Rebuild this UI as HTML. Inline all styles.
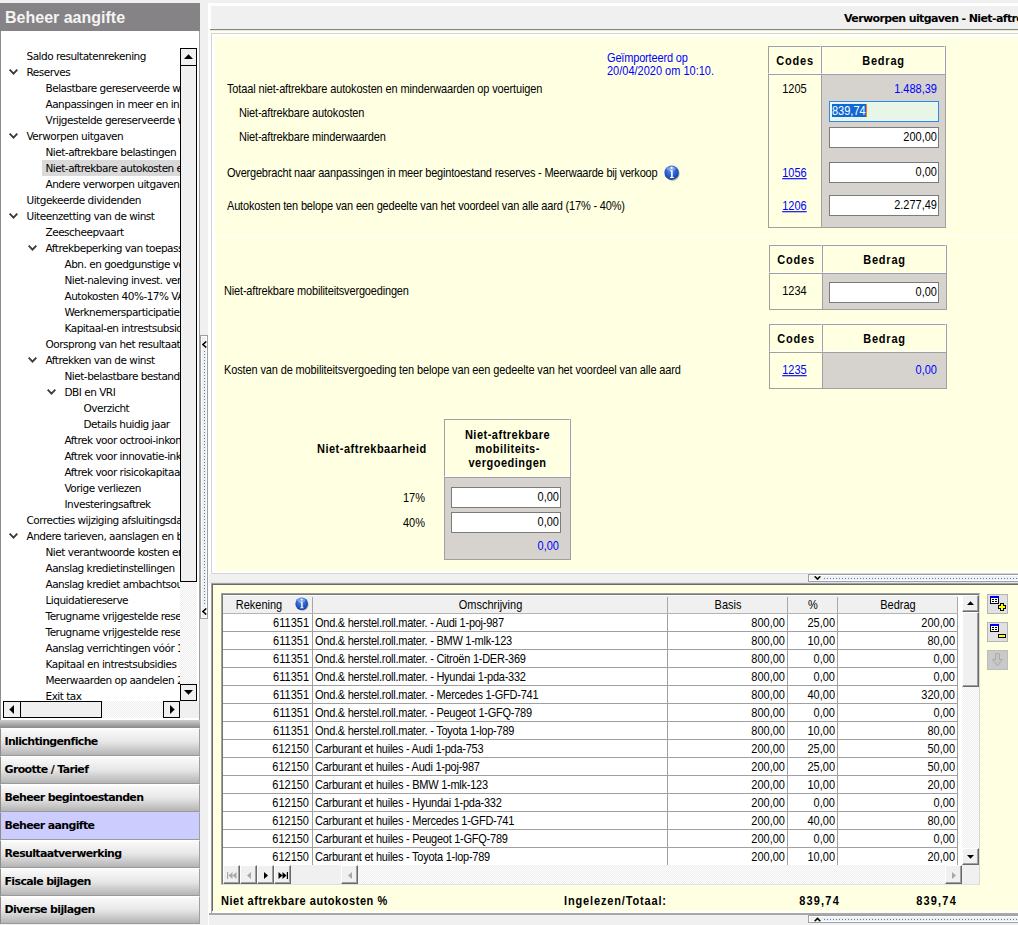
<!DOCTYPE html>
<html lang="nl"><head><meta charset="utf-8"><title>Beheer aangifte</title>
<style>
html,body{margin:0;padding:0}
body{width:1018px;height:925px;overflow:hidden;background:#f0f0f0;position:relative;font-family:"Liberation Sans",sans-serif;font-size:11px;color:#000}
div,span,a{position:absolute;box-sizing:border-box;white-space:nowrap}
.ms{font-family:"Liberation Sans",sans-serif;font-size:11px;line-height:14px;letter-spacing:-0.17px}
.b{font-weight:bold;letter-spacing:0.5px}
.hd{letter-spacing:0.8px;padding-left:1px}
.num{letter-spacing:0}
.t{position:static;display:inline-block;line-height:14px;transform:scaleY(1.12);transform-origin:50% 77%}
a .t{text-decoration:underline}
.blue{color:#0000ff}
a{color:#0000ff;text-decoration:underline}
/* sidebar */
#sbtitle{left:0;top:3px;width:200px;height:28px;background:#858385;color:#f4f4f4;font:bold 16px/30px "Liberation Sans",sans-serif;padding-left:5px}
#tree{left:0;top:31px;width:200px;height:689px;background:#fff;border-left:1px solid #8c8c8c;border-right:1px solid #a0a0a0;overflow:hidden}
.tr{left:0;height:16px;line-height:16px;font-family:"DejaVu Sans","Liberation Sans",sans-serif;font-size:10.5px;letter-spacing:-0.5px;color:#000}
.tr.sel{background:#d9d9d9}
.chev{width:9px;height:6px}
.nav{left:0;width:200px;height:28px;background:linear-gradient(#fbfbfb,#e6e6e6 50%,#b4b4b4);border-top:1px solid #fff;border-bottom:1px solid #9a9a9a;border-left:1px solid #8c8c8c;border-right:1px solid #a0a0a0;font:bold 11px/26px "DejaVu Sans","Liberation Sans",sans-serif;padding-left:3.5px;letter-spacing:-0.65px}
.nav.act{background:#ccccff;border-top-color:#ccccff}
/* main */
.inp{letter-spacing:0;background:#fff;border:1px solid #7b7b7b;height:21px;width:110px;text-align:right;padding-right:1px;line-height:18px}
.hd{background:#ffffe1;border-top:1px solid #a0a0a0;border-left:1px solid #a0a0a0;border-right:1px solid #fff;border-bottom:1px solid #fff;text-align:center;font-weight:bold}
.gcell{height:18px;line-height:19px;border-right:1px solid #a0a0a0;border-bottom:1px solid #a0a0a0;background:#fff;overflow:hidden}
.gh{height:19px;line-height:18px;text-align:center;background:#f0f0f0;border-right:1px solid #a0a0a0;border-bottom:1px solid #a0a0a0;border-top:1px solid #fff;border-left:1px solid #fff}
.r{text-align:right;padding-right:2px}
.l{padding-left:2px;letter-spacing:-0.25px}
.r1{padding-right:2px}
.r3{padding-right:3px}
</style></head><body>

<div id="sbtitle">Beheer aangifte</div>
<div id="tree">
<div class="tr" style="top:17px;left:25.5px">Saldo resultatenrekening</div>
<div class="tr" style="top:33px;left:0;width:25px"><svg class="chev" style="position:absolute;left:8.0px;top:5px" width="9" height="6" viewBox="0 0 9 6"><path d="M0.7 0.7 L4.5 4.6 L8.3 0.7" fill="none" stroke="#3c3c3c" stroke-width="1.9"/></svg></div>
<div class="tr" style="top:33px;left:25.5px">Reserves</div>
<div class="tr" style="top:49px;left:44.5px">Belastbare gereserveerde winst</div>
<div class="tr" style="top:65px;left:44.5px">Aanpassingen in meer en in min</div>
<div class="tr" style="top:81px;left:44.5px">Vrijgestelde gereserveerde winst</div>
<div class="tr" style="top:97px;left:0;width:25px"><svg class="chev" style="position:absolute;left:8.0px;top:5px" width="9" height="6" viewBox="0 0 9 6"><path d="M0.7 0.7 L4.5 4.6 L8.3 0.7" fill="none" stroke="#3c3c3c" stroke-width="1.9"/></svg></div>
<div class="tr" style="top:97px;left:25.5px">Verworpen uitgaven</div>
<div class="tr" style="top:113px;left:44.5px">Niet-aftrekbare belastingen</div>
<div class="tr sel" style="top:129px;left:41px;width:160px"></div>
<div class="tr" style="top:129px;left:44.5px">Niet-aftrekbare autokosten en</div>
<div class="tr" style="top:145px;left:44.5px">Andere verworpen uitgaven</div>
<div class="tr" style="top:161px;left:25.5px">Uitgekeerde dividenden</div>
<div class="tr" style="top:177px;left:0;width:25px"><svg class="chev" style="position:absolute;left:8.0px;top:5px" width="9" height="6" viewBox="0 0 9 6"><path d="M0.7 0.7 L4.5 4.6 L8.3 0.7" fill="none" stroke="#3c3c3c" stroke-width="1.9"/></svg></div>
<div class="tr" style="top:177px;left:25.5px">Uiteenzetting van de winst</div>
<div class="tr" style="top:193px;left:44.5px">Zeescheepvaart</div>
<div class="tr" style="top:209px;left:0;width:44px"><svg class="chev" style="position:absolute;left:27.0px;top:5px" width="9" height="6" viewBox="0 0 9 6"><path d="M0.7 0.7 L4.5 4.6 L8.3 0.7" fill="none" stroke="#3c3c3c" stroke-width="1.9"/></svg></div>
<div class="tr" style="top:209px;left:44.5px">Aftrekbeperking van toepassing</div>
<div class="tr" style="top:225px;left:63.5px">Abn. en goedgunstige voordelen</div>
<div class="tr" style="top:241px;left:63.5px">Niet-naleving invest. verplichting</div>
<div class="tr" style="top:257px;left:63.5px">Autokosten 40%-17% VAA</div>
<div class="tr" style="top:273px;left:63.5px">Werknemersparticipatie</div>
<div class="tr" style="top:289px;left:63.5px">Kapitaal-en intrestsubsidies</div>
<div class="tr" style="top:305px;left:44.5px">Oorsprong van het resultaat</div>
<div class="tr" style="top:321px;left:0;width:44px"><svg class="chev" style="position:absolute;left:27.0px;top:5px" width="9" height="6" viewBox="0 0 9 6"><path d="M0.7 0.7 L4.5 4.6 L8.3 0.7" fill="none" stroke="#3c3c3c" stroke-width="1.9"/></svg></div>
<div class="tr" style="top:321px;left:44.5px">Aftrekken van de winst</div>
<div class="tr" style="top:337px;left:63.5px">Niet-belastbare bestanddelen</div>
<div class="tr" style="top:353px;left:0;width:63px"><svg class="chev" style="position:absolute;left:46.0px;top:5px" width="9" height="6" viewBox="0 0 9 6"><path d="M0.7 0.7 L4.5 4.6 L8.3 0.7" fill="none" stroke="#3c3c3c" stroke-width="1.9"/></svg></div>
<div class="tr" style="top:353px;left:63.5px">DBI en VRI</div>
<div class="tr" style="top:369px;left:82.5px">Overzicht</div>
<div class="tr" style="top:385px;left:82.5px">Details huidig jaar</div>
<div class="tr" style="top:401px;left:63.5px">Aftrek voor octrooi-inkomsten</div>
<div class="tr" style="top:417px;left:63.5px">Aftrek voor innovatie-inkomsten</div>
<div class="tr" style="top:433px;left:63.5px">Aftrek voor risicokapitaal</div>
<div class="tr" style="top:449px;left:63.5px">Vorige verliezen</div>
<div class="tr" style="top:465px;left:63.5px">Investeringsaftrek</div>
<div class="tr" style="top:481px;left:25.5px">Correcties wijziging afsluitingsdatum</div>
<div class="tr" style="top:497px;left:0;width:25px"><svg class="chev" style="position:absolute;left:8.0px;top:5px" width="9" height="6" viewBox="0 0 9 6"><path d="M0.7 0.7 L4.5 4.6 L8.3 0.7" fill="none" stroke="#3c3c3c" stroke-width="1.9"/></svg></div>
<div class="tr" style="top:497px;left:25.5px">Andere tarieven, aanslagen en belastingen</div>
<div class="tr" style="top:513px;left:44.5px">Niet verantwoorde kosten en</div>
<div class="tr" style="top:529px;left:44.5px">Aanslag kredietinstellingen</div>
<div class="tr" style="top:545px;left:44.5px">Aanslag krediet ambachtsoutillage</div>
<div class="tr" style="top:561px;left:44.5px">Liquidatiereserve</div>
<div class="tr" style="top:577px;left:44.5px">Terugname vrijgestelde reserve</div>
<div class="tr" style="top:593px;left:44.5px">Terugname vrijgestelde reserve</div>
<div class="tr" style="top:609px;left:44.5px">Aanslag verrichtingen vóór 1990</div>
<div class="tr" style="top:625px;left:44.5px">Kapitaal en intrestsubsidies landbouw</div>
<div class="tr" style="top:641px;left:44.5px">Meerwaarden op aandelen 25%</div>
<div class="tr" style="top:657px;left:44.5px">Exit tax</div>
<div style="left:179px;top:17px;width:20px;height:671px;background:#fff"></div>
<div style="left:179px;top:34px;width:17px;height:620px;background:#f7f7f7;background-image:repeating-conic-gradient(#fff 0 25%,#ededed 0 50%);background-size:2px 2px"></div>
<div style="left:179px;top:17px;width:17px;height:18px;background:#f0f0f0;border:1px solid #000"><svg style="position:absolute;left:3px;top:5px" width="9" height="5" viewBox="0 0 9 5"><path d="M0 5 L4.5 0.3 L9 5Z" fill="#000"/></svg></div>
<div style="left:179px;top:34px;width:17px;height:517px;background:#f0f0f0;border:1px solid #000"></div>
<div style="left:179px;top:653px;width:17px;height:17px;background:#f0f0f0;border:1px solid #000"><svg style="position:absolute;left:3px;top:5px" width="9" height="5" viewBox="0 0 9 5"><path d="M0 0 L4.5 4.7 L9 0Z" fill="#000"/></svg></div>
<div style="left:0px;top:670px;width:198px;height:18px;background:#fff"></div>
<div style="left:2px;top:670px;width:177px;height:17px;background:#f7f7f7;background-image:repeating-conic-gradient(#fff 0 25%,#ededed 0 50%);background-size:2px 2px"></div>
<div style="left:179px;top:670px;width:19px;height:17px;background:#f0f0f0"></div>
<div style="left:2px;top:670px;width:18px;height:17px;background:#f0f0f0;border:1px solid #000"><svg style="position:absolute;left:5px;top:3px" width="5" height="9" viewBox="0 0 5 9"><path d="M5 0 L0.3 4.5 L5 9Z" fill="#000"/></svg></div>
<div style="left:19px;top:670px;width:82px;height:17px;background:#f0f0f0;border:1px solid #000"></div>
<div style="left:162px;top:670px;width:17px;height:17px;background:#f0f0f0;border:1px solid #000"><svg style="position:absolute;left:6px;top:3px" width="5" height="9" viewBox="0 0 5 9"><path d="M0 0 L4.7 4.5 L0 9Z" fill="#000"/></svg></div>
</div>
<div style="left:0;top:720px;width:200px;height:8px;background:linear-gradient(#cecece,#8a8a8a)"></div>
<div class="nav" style="top:728px">Inlichtingenfiche</div>
<div class="nav" style="top:756px">Grootte / Tarief</div>
<div class="nav" style="top:784px">Beheer begintoestanden</div>
<div class="nav act" style="top:812px">Beheer aangifte</div>
<div class="nav" style="top:840px">Resultaatverwerking</div>
<div class="nav" style="top:868px">Fiscale bijlagen</div>
<div class="nav" style="top:896px">Diverse bijlagen</div>
<div style="left:200px;top:335px;width:8px;height:284px;background:#f0f0f0;border:1px solid #a0a0a0;box-shadow:inset 0 0 0 1px #fff"></div>
<div style="left:204px;top:351px;width:1px;height:254px;background-image:repeating-linear-gradient(#2a86e0 0 1px,transparent 1px 3px);"></div>
<svg style="position:absolute;left:202px;top:341px" width="5" height="7" viewBox="0 0 5 7"><path d="M4.3 0.5 L0.9 3.5 L4.3 6.5" fill="none" stroke="#000" stroke-width="1.5"/></svg>
<svg style="position:absolute;left:202px;top:608px" width="5" height="7" viewBox="0 0 5 7"><path d="M4.3 0.5 L0.9 3.5 L4.3 6.5" fill="none" stroke="#000" stroke-width="1.5"/></svg>
<div style="left:208px;top:3px;width:810px;height:571px;background:#fff"></div>
<div style="left:211px;top:6px;width:807px;height:23px;background:#f0f0f0"></div>
<div style="left:210px;top:29px;width:808px;height:1px;background:#858585"></div>
<div style="left:210px;top:30px;width:808px;height:1px;background:#e8e8e8"></div>
<div style="left:211px;top:31px;width:807px;height:2px;background:#ffffe1"></div>
<div style="left:211px;top:33px;width:807px;height:541px;border-left:1px solid #d4d4d4;border-top:1px solid #d4d4d4;border-bottom:1px solid #d4d4d4"></div>
<div style="left:844px;top:12px;font:bold 11px/14px 'DejaVu Sans','Liberation Sans',sans-serif;letter-spacing:-0.62px">Verworpen uitgaven - Niet-aftrekbare autokosten</div>
<div style="left:215px;top:37px;width:803px;height:198px;background:#ffffe1"></div>
<div style="left:216px;top:236px;width:802px;height:335px;background:#ffffe1"></div>
<div class="ms blue" style="left:607px;top:51px;"><span class="t">Geïmporteerd op</span></div>
<div class="ms blue num" style="left:607px;top:64px;"><span class="t">20/04/2020 om 10:10.</span></div>
<div class="ms" style="left:227px;top:82px;letter-spacing:-0.14px"><span class="t">Totaal niet-aftrekbare autokosten en minderwaarden op voertuigen</span></div>
<div class="ms" style="left:239px;top:106px;"><span class="t">Niet-aftrekbare autokosten</span></div>
<div class="ms" style="left:239px;top:130px;"><span class="t">Niet-aftrekbare minderwaarden</span></div>
<div class="ms" style="left:227px;top:166px;letter-spacing:-0.2px"><span class="t">Overgebracht naar aanpassingen in meer begintoestand reserves - Meerwaarde bij verkoop</span></div>
<div class="ms" style="left:227px;top:199px;"><span class="t">Autokosten ten belope van een gedeelte van het voordeel van alle aard (17% - 40%)</span></div>
<div class="ms" style="left:224px;top:284px;"><span class="t">Niet-aftrekbare mobiliteitsvergoedingen</span></div>
<div class="ms" style="left:224px;top:363px;letter-spacing:-0.13px"><span class="t">Kosten van de mobiliteitsvergoeding ten belope van een gedeelte van het voordeel van alle aard</span></div>
<svg style="position:absolute;left:664px;top:165px" width="16" height="16" viewBox="0 0 16 16"><defs><radialGradient id="ig1" cx="0.45" cy="0.35" r="0.75"><stop offset="0" stop-color="#5a8eea"/><stop offset="0.6" stop-color="#1f55c6"/><stop offset="1" stop-color="#16348c"/></radialGradient></defs><circle cx="8.5" cy="8.7" r="7.1" fill="#8c8c8c" opacity="0.65"/><circle cx="7.6" cy="7.7" r="7.2" fill="url(#ig1)"/><ellipse cx="7.2" cy="3.6" rx="4.6" ry="2.4" fill="#fff" opacity="0.33"/><circle cx="7.7" cy="2.9" r="1.05" fill="#fff"/><path d="M6.2 5.3 H8.7 V11.9 H9.9 V12.9 H6 V11.9 H7.1 V6.3 H6.2Z" fill="#fff"/></svg>
<div style="left:768px;top:45px;width:177px;height:1px;background:#fff"></div>
<div class="hd ms" style="left:768px;top:46px;width:53px;height:28px;line-height:28px"><span class="t">Codes</span></div>
<div class="hd ms" style="left:821px;top:46px;width:124px;height:28px;line-height:28px"><span class="t">Bedrag</span></div>
<div style="left:945px;top:46px;width:1px;height:28px;background:#a0a0a0"></div>
<div style="left:768px;top:74px;width:53px;height:154px;background:#ffffe1;border:1px solid #a0a0a0;border-right:none"></div>
<div style="left:821px;top:74px;width:125px;height:154px;background:#d6d3ce;border:1px solid #a0a0a0"></div>
<div class="ms num" style="left:768px;top:82px;width:53px;text-align:center"><span class="t">1205</span></div>
<div class="ms blue num" style="left:829px;top:82px;width:108px;text-align:right"><span class="t">1.488,39</span></div>
<div class="inp ms" style="left:829px;top:101px;border:1px solid #2a8ae0;box-shadow:inset 0 0 0 1px #eaf5ff;background:#e8f6e8;text-align:left;padding:0"><span style="left:2px;top:2px;height:13px;line-height:13px;background:#1068d6;color:#fff;padding:0;border-right:1px solid #f08020"><span class="t">839,74</span></span></div>
<div class="inp ms" style="left:829px;top:127px"><span class="t">200,00</span></div>
<div class="inp ms" style="left:829px;top:162px"><span class="t">0,00</span></div>
<div class="inp ms" style="left:829px;top:195px"><span class="t">2.277,49</span></div>
<a class="ms num" style="left:768px;top:166px;width:53px;text-align:center"><span class="t">1056</span></a>
<a class="ms num" style="left:768px;top:199px;width:53px;text-align:center"><span class="t">1206</span></a>
<div style="left:769px;top:244px;width:177px;height:1px;background:#fff"></div>
<div class="hd ms" style="left:769px;top:245px;width:53px;height:28px;line-height:28px"><span class="t">Codes</span></div>
<div class="hd ms" style="left:822px;top:245px;width:124px;height:28px;line-height:28px"><span class="t">Bedrag</span></div>
<div style="left:946px;top:245px;width:1px;height:28px;background:#a0a0a0"></div>
<div style="left:769px;top:273px;width:53px;height:37px;background:#ffffe1;border:1px solid #a0a0a0;border-right:none"></div>
<div style="left:822px;top:273px;width:125px;height:37px;background:#d6d3ce;border:1px solid #a0a0a0"></div>
<div class="ms num" style="left:768px;top:284px;width:53px;text-align:center"><span class="t">1234</span></div>
<div class="inp ms" style="left:829px;top:282px"><span class="t">0,00</span></div>
<div style="left:769px;top:323px;width:177px;height:1px;background:#fff"></div>
<div class="hd ms" style="left:769px;top:324px;width:53px;height:28px;line-height:28px"><span class="t">Codes</span></div>
<div class="hd ms" style="left:822px;top:324px;width:124px;height:28px;line-height:28px"><span class="t">Bedrag</span></div>
<div style="left:946px;top:324px;width:1px;height:28px;background:#a0a0a0"></div>
<div style="left:769px;top:352px;width:53px;height:37px;background:#ffffe1;border:1px solid #a0a0a0;border-right:none"></div>
<div style="left:822px;top:352px;width:125px;height:37px;background:#d6d3ce;border:1px solid #a0a0a0"></div>
<a class="ms num" style="left:768px;top:363px;width:53px;text-align:center"><span class="t">1235</span></a>
<div class="ms blue num" style="left:829px;top:363px;width:108px;text-align:right"><span class="t">0,00</span></div>
<div style="left:570px;top:419px;width:1px;height:58px;background:#a0a0a0"></div>
<div class="hd ms" style="left:444px;top:419px;width:126px;height:58px;line-height:13px;white-space:normal;padding-top:8px;letter-spacing:0.5px"><span class="t">Niet-aftrekbare</span><br><span class="t">mobiliteits-</span><br><span class="t">vergoedingen</span></div>
<div style="left:444px;top:477px;width:127px;height:83px;background:#d6d3ce;border:1px solid #a0a0a0"></div>
<div class="ms b" style="left:317px;top:442px;"><span class="t">Niet-aftrekbaarheid</span></div>
<div class="ms num" style="left:380px;top:491px;width:45px;text-align:right"><span class="t">17%</span></div>
<div class="ms num" style="left:380px;top:516px;width:45px;text-align:right"><span class="t">40%</span></div>
<div class="inp ms" style="left:451px;top:487px"><span class="t">0,00</span></div>
<div class="inp ms" style="left:451px;top:512px"><span class="t">0,00</span></div>
<div class="ms blue num" style="left:451px;top:539px;width:108px;text-align:right"><span class="t">0,00</span></div>
<div style="left:209px;top:574px;width:809px;height:9px;background:#f0f0f0"></div>
<div style="left:808px;top:574px;width:215px;height:8px;background:#f0f0f0;border:1px solid #a0a0a0;box-shadow:inset 0 0 0 1px #fff"></div>
<div style="left:824px;top:578px;width:194px;height:1px;background-image:repeating-linear-gradient(90deg,#2a86e0 0 1px,transparent 1px 3px)"></div>
<svg style="position:absolute;left:814px;top:576px" width="7" height="5" viewBox="0 0 7 5"><path d="M0.7 0.3 L3.5 3.1 L6.3 0.3" fill="none" stroke="#000" stroke-width="1.5"/></svg>
<div style="left:208px;top:574px;width:1px;height:351px;background:#fff"></div>
<div style="left:208px;top:583px;width:4px;height:330px;background:#fff"></div>
<div style="left:209px;top:582px;width:809px;height:1px;background:#e4e4e4"></div>
<div style="left:211px;top:583px;width:807px;height:330px;background:#fff;border-top:1px solid #a0a0a0;border-left:1px solid #a0a0a0"></div>
<div style="left:209px;top:913px;width:809px;height:2px;background:#a8a8a8"></div>
<div style="left:212px;top:584px;width:806px;height:327px;background:#ffffe1;border-top:1px solid #696969;border-left:1px solid #696969"></div>
<div style="left:221px;top:593px;width:759px;height:292px;background:#f0f0f0;border:1px solid #a0a0a0;border-right-color:#d8d8d8;border-bottom-color:#e0e0e0"></div>
<div style="left:222px;top:594px;width:757px;height:290px;background:#f0f0f0;border-top:1px solid #787878;border-left:1px solid #787878"></div>
<div style="left:223px;top:595px;width:735px;height:19px;background:#f0f0f0;border-top:1px solid #fff;border-bottom:1px solid #b4b4b4"></div>
<div class="ms" style="left:223px;top:598px;width:90px;text-align:center;letter-spacing:0;padding-right:18px;"><span class="t">Rekening</span></div>
<div style="left:312px;top:597px;width:1px;height:16px;background:#a8a8a8"></div>
<div class="ms" style="left:313px;top:598px;width:355px;text-align:center;letter-spacing:0;"><span class="t">Omschrijving</span></div>
<div style="left:667px;top:597px;width:1px;height:16px;background:#a8a8a8"></div>
<div class="ms" style="left:668px;top:598px;width:120px;text-align:center;letter-spacing:0;"><span class="t">Basis</span></div>
<div style="left:787px;top:597px;width:1px;height:16px;background:#a8a8a8"></div>
<div class="ms" style="left:788px;top:598px;width:50px;text-align:center;letter-spacing:0;"><span class="t">%</span></div>
<div style="left:837px;top:597px;width:1px;height:16px;background:#a8a8a8"></div>
<div class="ms" style="left:838px;top:598px;width:120px;text-align:center;letter-spacing:0;"><span class="t">Bedrag</span></div>
<div style="left:957px;top:597px;width:1px;height:16px;background:#a8a8a8"></div>
<svg style="position:absolute;left:295px;top:597px" width="14" height="14" viewBox="0 0 16 16"><defs><radialGradient id="ig2" cx="0.45" cy="0.35" r="0.75"><stop offset="0" stop-color="#5a8eea"/><stop offset="0.6" stop-color="#1f55c6"/><stop offset="1" stop-color="#16348c"/></radialGradient></defs><circle cx="8.5" cy="8.7" r="7.1" fill="#8c8c8c" opacity="0.65"/><circle cx="7.6" cy="7.7" r="7.2" fill="url(#ig2)"/><ellipse cx="7.2" cy="3.6" rx="4.6" ry="2.4" fill="#fff" opacity="0.33"/><circle cx="7.7" cy="2.9" r="1.05" fill="#fff"/><path d="M6.2 5.3 H8.7 V11.9 H9.9 V12.9 H6 V11.9 H7.1 V6.3 H6.2Z" fill="#fff"/></svg>
<div class="gcell ms r num r3" style="left:223px;top:614px;width:90px"><span class="t">611351</span></div>
<div class="gcell ms l" style="left:313px;top:614px;width:355px"><span class="t">Ond.&amp; herstel.roll.mater. - Audi 1-poj-987</span></div>
<div class="gcell ms r num" style="left:668px;top:614px;width:120px"><span class="t">800,00</span></div>
<div class="gcell ms r num" style="left:788px;top:614px;width:50px"><span class="t">25,00</span></div>
<div class="gcell ms r num" style="left:838px;top:614px;width:120px"><span class="t">200,00</span></div>
<div class="gcell ms r num r3" style="left:223px;top:632px;width:90px"><span class="t">611351</span></div>
<div class="gcell ms l" style="left:313px;top:632px;width:355px"><span class="t">Ond.&amp; herstel.roll.mater. - BMW 1-mlk-123</span></div>
<div class="gcell ms r num" style="left:668px;top:632px;width:120px"><span class="t">800,00</span></div>
<div class="gcell ms r num" style="left:788px;top:632px;width:50px"><span class="t">10,00</span></div>
<div class="gcell ms r num" style="left:838px;top:632px;width:120px"><span class="t">80,00</span></div>
<div class="gcell ms r num r3" style="left:223px;top:650px;width:90px"><span class="t">611351</span></div>
<div class="gcell ms l" style="left:313px;top:650px;width:355px"><span class="t">Ond.&amp; herstel.roll.mater. - Citroën 1-DER-369</span></div>
<div class="gcell ms r num" style="left:668px;top:650px;width:120px"><span class="t">800,00</span></div>
<div class="gcell ms r num" style="left:788px;top:650px;width:50px"><span class="t">0,00</span></div>
<div class="gcell ms r num" style="left:838px;top:650px;width:120px"><span class="t">0,00</span></div>
<div class="gcell ms r num r3" style="left:223px;top:668px;width:90px"><span class="t">611351</span></div>
<div class="gcell ms l" style="left:313px;top:668px;width:355px"><span class="t">Ond.&amp; herstel.roll.mater. - Hyundai 1-pda-332</span></div>
<div class="gcell ms r num" style="left:668px;top:668px;width:120px"><span class="t">800,00</span></div>
<div class="gcell ms r num" style="left:788px;top:668px;width:50px"><span class="t">0,00</span></div>
<div class="gcell ms r num" style="left:838px;top:668px;width:120px"><span class="t">0,00</span></div>
<div class="gcell ms r num r3" style="left:223px;top:686px;width:90px"><span class="t">611351</span></div>
<div class="gcell ms l" style="left:313px;top:686px;width:355px"><span class="t">Ond.&amp; herstel.roll.mater. - Mercedes 1-GFD-741</span></div>
<div class="gcell ms r num" style="left:668px;top:686px;width:120px"><span class="t">800,00</span></div>
<div class="gcell ms r num" style="left:788px;top:686px;width:50px"><span class="t">40,00</span></div>
<div class="gcell ms r num" style="left:838px;top:686px;width:120px"><span class="t">320,00</span></div>
<div class="gcell ms r num r3" style="left:223px;top:704px;width:90px"><span class="t">611351</span></div>
<div class="gcell ms l" style="left:313px;top:704px;width:355px"><span class="t">Ond.&amp; herstel.roll.mater. - Peugeot 1-GFQ-789</span></div>
<div class="gcell ms r num" style="left:668px;top:704px;width:120px"><span class="t">800,00</span></div>
<div class="gcell ms r num" style="left:788px;top:704px;width:50px"><span class="t">0,00</span></div>
<div class="gcell ms r num" style="left:838px;top:704px;width:120px"><span class="t">0,00</span></div>
<div class="gcell ms r num r3" style="left:223px;top:722px;width:90px"><span class="t">611351</span></div>
<div class="gcell ms l" style="left:313px;top:722px;width:355px"><span class="t">Ond.&amp; herstel.roll.mater. - Toyota 1-lop-789</span></div>
<div class="gcell ms r num" style="left:668px;top:722px;width:120px"><span class="t">800,00</span></div>
<div class="gcell ms r num" style="left:788px;top:722px;width:50px"><span class="t">10,00</span></div>
<div class="gcell ms r num" style="left:838px;top:722px;width:120px"><span class="t">80,00</span></div>
<div class="gcell ms r num r3" style="left:223px;top:740px;width:90px"><span class="t">612150</span></div>
<div class="gcell ms l" style="left:313px;top:740px;width:355px"><span class="t">Carburant et huiles - Audi 1-pda-753</span></div>
<div class="gcell ms r num" style="left:668px;top:740px;width:120px"><span class="t">200,00</span></div>
<div class="gcell ms r num" style="left:788px;top:740px;width:50px"><span class="t">25,00</span></div>
<div class="gcell ms r num" style="left:838px;top:740px;width:120px"><span class="t">50,00</span></div>
<div class="gcell ms r num r3" style="left:223px;top:758px;width:90px"><span class="t">612150</span></div>
<div class="gcell ms l" style="left:313px;top:758px;width:355px"><span class="t">Carburant et huiles - Audi 1-poj-987</span></div>
<div class="gcell ms r num" style="left:668px;top:758px;width:120px"><span class="t">200,00</span></div>
<div class="gcell ms r num" style="left:788px;top:758px;width:50px"><span class="t">25,00</span></div>
<div class="gcell ms r num" style="left:838px;top:758px;width:120px"><span class="t">50,00</span></div>
<div class="gcell ms r num r3" style="left:223px;top:776px;width:90px"><span class="t">612150</span></div>
<div class="gcell ms l" style="left:313px;top:776px;width:355px"><span class="t">Carburant et huiles - BMW 1-mlk-123</span></div>
<div class="gcell ms r num" style="left:668px;top:776px;width:120px"><span class="t">200,00</span></div>
<div class="gcell ms r num" style="left:788px;top:776px;width:50px"><span class="t">10,00</span></div>
<div class="gcell ms r num" style="left:838px;top:776px;width:120px"><span class="t">20,00</span></div>
<div class="gcell ms r num r3" style="left:223px;top:794px;width:90px"><span class="t">612150</span></div>
<div class="gcell ms l" style="left:313px;top:794px;width:355px"><span class="t">Carburant et huiles - Hyundai 1-pda-332</span></div>
<div class="gcell ms r num" style="left:668px;top:794px;width:120px"><span class="t">200,00</span></div>
<div class="gcell ms r num" style="left:788px;top:794px;width:50px"><span class="t">0,00</span></div>
<div class="gcell ms r num" style="left:838px;top:794px;width:120px"><span class="t">0,00</span></div>
<div class="gcell ms r num r3" style="left:223px;top:812px;width:90px"><span class="t">612150</span></div>
<div class="gcell ms l" style="left:313px;top:812px;width:355px"><span class="t">Carburant et huiles - Mercedes 1-GFD-741</span></div>
<div class="gcell ms r num" style="left:668px;top:812px;width:120px"><span class="t">200,00</span></div>
<div class="gcell ms r num" style="left:788px;top:812px;width:50px"><span class="t">40,00</span></div>
<div class="gcell ms r num" style="left:838px;top:812px;width:120px"><span class="t">80,00</span></div>
<div class="gcell ms r num r3" style="left:223px;top:830px;width:90px"><span class="t">612150</span></div>
<div class="gcell ms l" style="left:313px;top:830px;width:355px"><span class="t">Carburant et huiles - Peugeot 1-GFQ-789</span></div>
<div class="gcell ms r num" style="left:668px;top:830px;width:120px"><span class="t">200,00</span></div>
<div class="gcell ms r num" style="left:788px;top:830px;width:50px"><span class="t">0,00</span></div>
<div class="gcell ms r num" style="left:838px;top:830px;width:120px"><span class="t">0,00</span></div>
<div class="gcell ms r num r3" style="left:223px;top:848px;width:90px"><span class="t">612150</span></div>
<div class="gcell ms l" style="left:313px;top:848px;width:355px"><span class="t">Carburant et huiles - Toyota 1-lop-789</span></div>
<div class="gcell ms r num" style="left:668px;top:848px;width:120px"><span class="t">200,00</span></div>
<div class="gcell ms r num" style="left:788px;top:848px;width:50px"><span class="t">10,00</span></div>
<div class="gcell ms r num" style="left:838px;top:848px;width:120px"><span class="t">20,00</span></div>
<div style="left:958px;top:595px;width:21px;height:270px;background:#fff"></div>
<div style="left:962px;top:595px;width:17px;height:270px;background:#f7f7f7;background-image:repeating-conic-gradient(#fff 0 25%,#ededed 0 50%);background-size:2px 2px"></div>
<div style="left:962px;top:595px;width:17px;height:17px;background:#f0f0f0;border-top:1px solid #fff;border-left:1px solid #fff;border-right:1px solid #696969;border-bottom:1px solid #696969;box-shadow:inset -1px -1px 0 #a0a0a0"><svg style="position:absolute;left:4px;top:5px" width="7" height="4" viewBox="0 0 7 4"><path d="M0 4 L3.5 0.3 L7 4Z" fill="#000"/></svg></div>
<div style="left:962px;top:612px;width:17px;height:75px;background:#f0f0f0;border-top:1px solid #fff;border-left:1px solid #fff;border-right:1px solid #696969;border-bottom:1px solid #696969;box-shadow:inset -1px -1px 0 #a0a0a0"></div>
<div style="left:962px;top:848px;width:17px;height:17px;background:#f0f0f0;border-top:1px solid #fff;border-left:1px solid #fff;border-right:1px solid #696969;border-bottom:1px solid #696969;box-shadow:inset -1px -1px 0 #a0a0a0"><svg style="position:absolute;left:4px;top:6px" width="7" height="4" viewBox="0 0 7 4"><path d="M0 0 L3.5 3.7 L7 0Z" fill="#000"/></svg></div>
<div style="left:223px;top:865px;width:756px;height:19px;background:#f0f0f0"></div>
<div style="left:358px;top:865px;width:588px;height:19px;background:#f7f7f7;background-image:repeating-conic-gradient(#fff 0 25%,#ededed 0 50%);background-size:2px 2px"></div>
<div style="left:223px;top:865px;width:17px;height:19px;background:#f0f0f0;border-top:1px solid #fff;border-left:1px solid #fff;border-right:1px solid #696969;border-bottom:1px solid #696969;box-shadow:inset -1px -1px 0 #a0a0a0"><svg style="position:absolute;left:3px;top:6px" width="10" height="7" viewBox="0 0 10 8" preserveAspectRatio="none"><path d="M0 0 H1.2 V8 H0Z M5.5 0 V8 L1.5 4Z M9.5 0 V8 L5.5 4Z" fill="#a8a8a8"/></svg></div>
<div style="left:240px;top:865px;width:17px;height:19px;background:#f0f0f0;border-top:1px solid #fff;border-left:1px solid #fff;border-right:1px solid #696969;border-bottom:1px solid #696969;box-shadow:inset -1px -1px 0 #a0a0a0"><svg style="position:absolute;left:3px;top:6px" width="10" height="7" viewBox="0 0 10 8" preserveAspectRatio="none"><path d="M7 0 V8 L3 4Z" fill="#a8a8a8"/></svg></div>
<div style="left:257px;top:865px;width:17px;height:19px;background:#f0f0f0;border-top:1px solid #fff;border-left:1px solid #fff;border-right:1px solid #696969;border-bottom:1px solid #696969;box-shadow:inset -1px -1px 0 #a0a0a0"><svg style="position:absolute;left:3px;top:6px" width="10" height="7" viewBox="0 0 10 8" preserveAspectRatio="none"><path d="M3 0 V8 L7 4Z" fill="#000"/></svg></div>
<div style="left:274px;top:865px;width:17px;height:19px;background:#f0f0f0;border-top:1px solid #fff;border-left:1px solid #fff;border-right:1px solid #696969;border-bottom:1px solid #696969;box-shadow:inset -1px -1px 0 #a0a0a0"><svg style="position:absolute;left:3px;top:6px" width="10" height="7" viewBox="0 0 10 8" preserveAspectRatio="none"><path d="M0.5 0 V8 L4.5 4Z M4.5 0 V8 L8.5 4Z M8.8 0 H10 V8 H8.8Z" fill="#000"/></svg></div>
<div style="left:341px;top:865px;width:17px;height:19px;background:#f0f0f0;border-top:1px solid #fff;border-left:1px solid #fff;border-right:1px solid #696969;border-bottom:1px solid #696969;box-shadow:inset -1px -1px 0 #a0a0a0"><svg style="position:absolute;left:3px;top:6px" width="10" height="7" viewBox="0 0 10 8" preserveAspectRatio="none"><path d="M7 0 V8 L3 4Z" fill="#a8a8a8"/></svg></div>
<div style="left:945px;top:865px;width:17px;height:19px;background:#f0f0f0;border-top:1px solid #fff;border-left:1px solid #fff;border-right:1px solid #696969;border-bottom:1px solid #696969;box-shadow:inset -1px -1px 0 #a0a0a0"><svg style="position:absolute;left:3px;top:6px" width="10" height="7" viewBox="0 0 10 8" preserveAspectRatio="none"><path d="M3 0 V8 L7 4Z" fill="#a8a8a8"/></svg></div>
<div style="left:987px;top:594px;width:21px;height:20px;background:#e1e1e1;border:1px solid #b4b4b4"><svg style="position:absolute;left:0;top:0" width="19" height="18" viewBox="0 0 19 18" shape-rendering="crispEdges"><rect x="2" y="1" width="9" height="1" fill="#0000ff"/><rect x="2" y="2" width="9" height="1" fill="#0000ff"/><rect x="2" y="3" width="1" height="1" fill="#000"/><rect x="3" y="3" width="7" height="1" fill="#fff"/><rect x="10" y="3" width="1" height="1" fill="#000"/><rect x="2" y="4" width="1" height="1" fill="#000"/><rect x="3" y="4" width="1" height="1" fill="#fff"/><rect x="4" y="4" width="2" height="1" fill="#000"/><rect x="6" y="4" width="1" height="1" fill="#fff"/><rect x="7" y="4" width="2" height="1" fill="#000"/><rect x="9" y="4" width="1" height="1" fill="#fff"/><rect x="10" y="4" width="1" height="1" fill="#000"/><rect x="2" y="5" width="1" height="1" fill="#000"/><rect x="3" y="5" width="7" height="1" fill="#fff"/><rect x="10" y="5" width="1" height="1" fill="#000"/><rect x="2" y="6" width="1" height="1" fill="#000"/><rect x="3" y="6" width="1" height="1" fill="#fff"/><rect x="4" y="6" width="2" height="1" fill="#000"/><rect x="6" y="6" width="1" height="1" fill="#fff"/><rect x="7" y="6" width="2" height="1" fill="#000"/><rect x="9" y="6" width="1" height="1" fill="#fff"/><rect x="10" y="6" width="1" height="1" fill="#000"/><rect x="2" y="7" width="1" height="1" fill="#000"/><rect x="3" y="7" width="7" height="1" fill="#fff"/><rect x="10" y="7" width="1" height="1" fill="#000"/><rect x="2" y="8" width="9" height="1" fill="#000"/><rect x="12" y="8" width="4" height="1" fill="#000"/><rect x="12" y="9" width="1" height="1" fill="#000"/><rect x="13" y="9" width="2" height="1" fill="#ffff00"/><rect x="15" y="9" width="1" height="1" fill="#000"/><rect x="10" y="10" width="3" height="1" fill="#000"/><rect x="13" y="10" width="2" height="1" fill="#ffff00"/><rect x="15" y="10" width="3" height="1" fill="#000"/><rect x="10" y="11" width="1" height="1" fill="#000"/><rect x="11" y="11" width="6" height="1" fill="#ffff00"/><rect x="17" y="11" width="1" height="1" fill="#000"/><rect x="10" y="12" width="1" height="1" fill="#000"/><rect x="11" y="12" width="6" height="1" fill="#ffff00"/><rect x="17" y="12" width="1" height="1" fill="#000"/><rect x="10" y="13" width="3" height="1" fill="#000"/><rect x="13" y="13" width="2" height="1" fill="#ffff00"/><rect x="15" y="13" width="3" height="1" fill="#000"/><rect x="12" y="14" width="1" height="1" fill="#000"/><rect x="13" y="14" width="2" height="1" fill="#ffff00"/><rect x="15" y="14" width="1" height="1" fill="#000"/><rect x="12" y="15" width="4" height="1" fill="#000"/></svg></div>
<div style="left:987px;top:622px;width:21px;height:20px;background:#e1e1e1;border:1px solid #b4b4b4"><svg style="position:absolute;left:0;top:0" width="19" height="18" viewBox="0 0 19 18" shape-rendering="crispEdges"><rect x="2" y="1" width="9" height="1" fill="#0000ff"/><rect x="2" y="2" width="9" height="1" fill="#0000ff"/><rect x="2" y="3" width="1" height="1" fill="#000"/><rect x="3" y="3" width="7" height="1" fill="#fff"/><rect x="10" y="3" width="1" height="1" fill="#000"/><rect x="2" y="4" width="1" height="1" fill="#000"/><rect x="3" y="4" width="1" height="1" fill="#fff"/><rect x="4" y="4" width="2" height="1" fill="#000"/><rect x="6" y="4" width="1" height="1" fill="#fff"/><rect x="7" y="4" width="2" height="1" fill="#000"/><rect x="9" y="4" width="1" height="1" fill="#fff"/><rect x="10" y="4" width="1" height="1" fill="#000"/><rect x="2" y="5" width="1" height="1" fill="#000"/><rect x="3" y="5" width="7" height="1" fill="#fff"/><rect x="10" y="5" width="1" height="1" fill="#000"/><rect x="2" y="6" width="1" height="1" fill="#000"/><rect x="3" y="6" width="1" height="1" fill="#fff"/><rect x="4" y="6" width="2" height="1" fill="#000"/><rect x="6" y="6" width="1" height="1" fill="#fff"/><rect x="7" y="6" width="2" height="1" fill="#000"/><rect x="9" y="6" width="1" height="1" fill="#fff"/><rect x="10" y="6" width="1" height="1" fill="#000"/><rect x="2" y="7" width="1" height="1" fill="#000"/><rect x="3" y="7" width="7" height="1" fill="#fff"/><rect x="10" y="7" width="1" height="1" fill="#000"/><rect x="2" y="8" width="9" height="1" fill="#000"/><rect x="10" y="11" width="8" height="1" fill="#000"/><rect x="10" y="12" width="1" height="1" fill="#000"/><rect x="11" y="12" width="6" height="1" fill="#ffff00"/><rect x="17" y="12" width="1" height="1" fill="#000"/><rect x="10" y="13" width="1" height="1" fill="#000"/><rect x="11" y="13" width="6" height="1" fill="#ffff00"/><rect x="17" y="13" width="1" height="1" fill="#000"/><rect x="10" y="14" width="8" height="1" fill="#000"/></svg></div>
<div style="left:987px;top:650px;width:21px;height:20px;background:#c9c9c9;border:1px solid #bcbcbc"><svg style="position:absolute;left:0;top:0" width="19" height="18" viewBox="0 0 19 18"><path d="M7.5 2.5 H11.5 V8.5 H14.5 L9.5 15 L4.5 8.5 H7.5Z" fill="#c4c4c4" stroke="#acacac"/></svg></div>
<div class="ms b" style="left:221px;top:894px;letter-spacing:0.54px"><span class="t">Niet aftrekbare autokosten %</span></div>
<div class="ms b" style="left:564px;top:894px;letter-spacing:0.85px"><span class="t">Ingelezen/Totaal:</span></div>
<div class="ms b" style="left:760px;top:894px;width:80px;text-align:right;letter-spacing:1.2px"><span class="t">839,74</span></div>
<div class="ms b" style="left:877px;top:894px;width:80px;text-align:right;letter-spacing:1.2px"><span class="t">839,74</span></div>
<div style="left:209px;top:915px;width:809px;height:9px;background:#f0f0f0"></div>
<div style="left:808px;top:915px;width:215px;height:8px;background:#f0f0f0;border:1px solid #a0a0a0;box-shadow:inset 0 0 0 1px #fff"></div>
<div style="left:824px;top:919px;width:194px;height:1px;background-image:repeating-linear-gradient(90deg,#2a86e0 0 1px,transparent 1px 3px)"></div>
<svg style="position:absolute;left:814px;top:917px" width="7" height="5" viewBox="0 0 7 5"><path d="M0.7 4.2 L3.5 1.4 L6.3 4.2" fill="none" stroke="#000" stroke-width="1.5"/></svg>
</body></html>
